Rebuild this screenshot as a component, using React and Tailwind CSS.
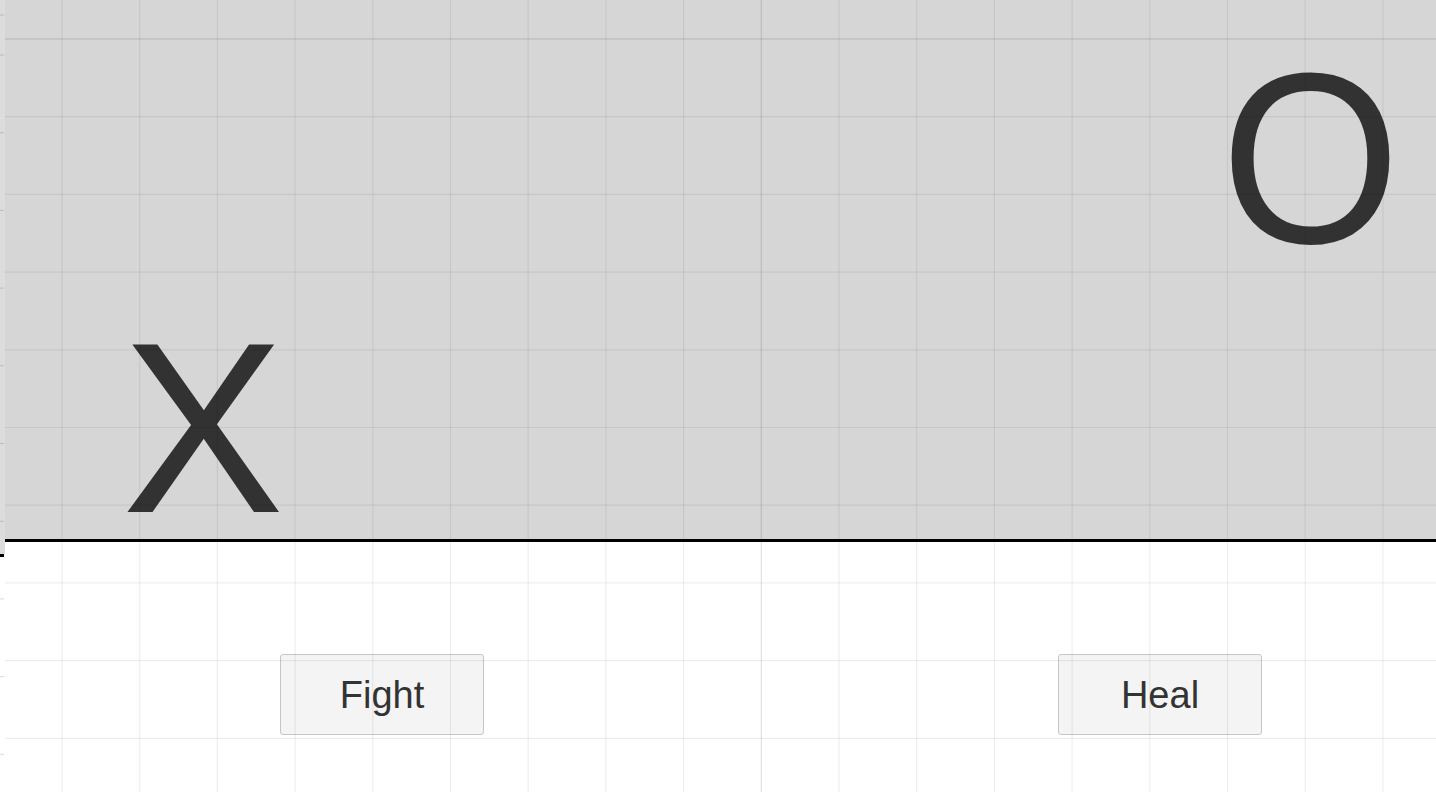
const STEP = 77.7;
const cols = Array.from({ length: 18 }, (_, i) => 62 + STEP * i);
const rows = Array.from({ length: 10 }, (_, i) => 39 + STEP * i);
const ticks = Array.from({ length: 10 }, (_, i) => 55 + STEP * i);

function GridOverlay() {
  return (
    <svg
      className="absolute inset-0 pointer-events-none"
      width="1436"
      height="792"
      viewBox="0 0 1436 792"
    >
      {cols.map((x, i) => (
        <line
          key={'c' + i}
          x1={x}
          x2={x}
          y1="0"
          y2="792"
          stroke="#000"
          strokeOpacity={i === 9 ? 0.12 : 0.065}
          strokeWidth="1.2"
        />
      ))}
      {rows.map((y, i) => (
        <line
          key={'r' + i}
          x1="5"
          x2="1436"
          y1={y}
          y2={y}
          stroke="#000"
          strokeOpacity={i === 0 ? 0.14 : 0.065}
          strokeWidth="1.2"
        />
      ))}
      <line x1="0" x2="4" y1="15" y2="15" stroke="#000" strokeOpacity="0.15" />
      {ticks.map((y, i) => (
        <line key={'t' + i} x1="0" x2="4" y1={y} y2={y} stroke="#000" strokeOpacity="0.15" />
      ))}
    </svg>
  );
}

function SceneButton({ label }) {
  return (
    <button className="w-[204px] h-[81px] flex items-center justify-center rounded-[3px] border border-[#c6c6c6] bg-[#f4f4f4] text-[38px] leading-none text-[#333333]">
      {label}
    </button>
  );
}

export default function App() {
  return (
    <div className="relative w-[1436px] h-[792px] overflow-hidden bg-white font-['Liberation_Sans',Arial,sans-serif] flex">
      {/* ruler strip */}
      <div className="w-[5px] flex flex-col">
        <div className="h-[554px] bg-[#dcdcdc]" />
        <div className="h-[3px] w-[4px] bg-black" />
        <div className="flex-1 bg-white" />
      </div>

      <div className="flex-1 flex flex-col">
        {/* scene panel */}
        <div className="h-[539px] bg-[#d6d6d6] flex justify-between text-[243px] text-[#323232]">
          <div className="self-end pl-[117px] leading-[222px]">X</div>
          <div className="self-start mt-[37px] mr-[31px] leading-none scale-x-95">O</div>
        </div>
        <div className="h-[3px] bg-black" />

        {/* actions */}
        <div className="flex-1 flex items-start pt-[112px] pl-[275px] gap-[574px]">
          <SceneButton label="Fight" />
          <SceneButton label="Heal" />
        </div>
      </div>

      <GridOverlay />
    </div>
  );
}
